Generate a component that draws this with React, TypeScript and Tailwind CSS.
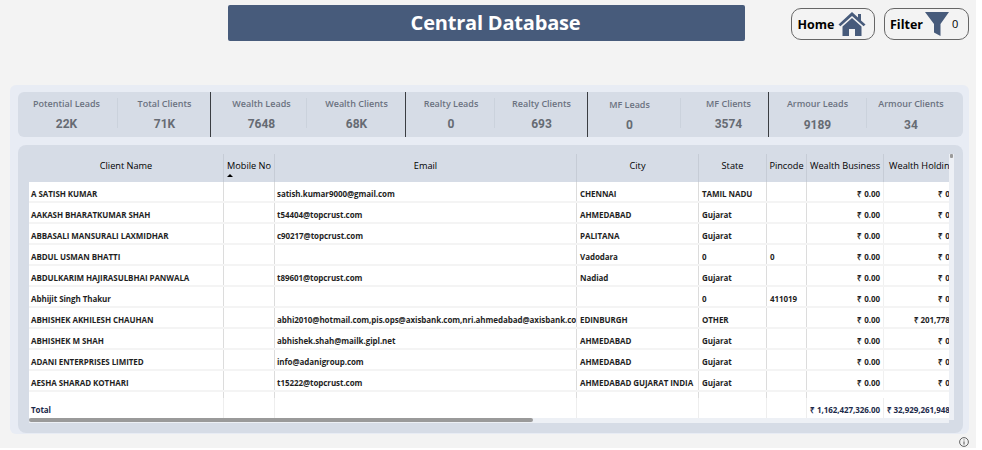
const kpiGroups = [
  [
    { label: "Potential Leads", value: "22K", width: "w-[99px]", pad: "pr-[2px]" },
    { label: "Total Clients", value: "71K", width: "w-[93px]", pad: "" },
  ],
  [
    { label: "Wealth Leads", value: "7648", width: "w-[95px]", pad: "pl-[6px]" },
    { label: "Wealth Clients", value: "68K", width: "w-[99px]", pad: "" },
  ],
  [
    { label: "Realty Leads", value: "0", width: "w-[88px]", pad: "pl-[2px]" },
    { label: "Realty Clients", value: "693", width: "w-[93px]", pad: "" },
  ],
  [
    { label: "MF Leads", value: "0", width: "w-[92px]", pad: "pr-[9px] pt-[6px]" },
    { label: "MF Clients", value: "3574", width: "w-[88px]", pad: "pl-[7px]" },
  ],
  [
    { label: "Armour Leads", value: "9189", width: "w-[97px]", pad: "", low: true },
    { label: "Armour Clients", value: "34", width: "w-[96px]", pad: "pr-[8px]", low: true },
  ],
];

const rows = [
  ["A SATISH KUMAR", "", "satish.kumar9000@gmail.com", "CHENNAI", "TAMIL NADU", "", "₹ 0.00", "₹ 0.00"],
  ["AAKASH BHARATKUMAR SHAH", "", "t54404@topcrust.com", "AHMEDABAD", "Gujarat", "", "₹ 0.00", "₹ 0.00"],
  ["ABBASALI MANSURALI LAXMIDHAR", "", "c90217@topcrust.com", "PALITANA", "Gujarat", "", "₹ 0.00", "₹ 0.00"],
  ["ABDUL USMAN BHATTI", "", "", "Vadodara", "0", "0", "₹ 0.00", "₹ 0.00"],
  ["ABDULKARIM HAJIRASULBHAI PANWALA", "", "t89601@topcrust.com", "Nadiad", "Gujarat", "", "₹ 0.00", "₹ 0.00"],
  ["Abhijit Singh Thakur", "", "", "", "0", "411019", "₹ 0.00", "₹ 0.00"],
  ["ABHISHEK AKHILESH CHAUHAN", "", "abhi2010@hotmail.com,pis.ops@axisbank.com,nri.ahmedabad@axisbank.com", "EDINBURGH", "OTHER", "", "₹ 0.00", "₹ 201,778.00"],
  ["ABHISHEK M SHAH", "", "abhishek.shah@mailk.gipl.net", "AHMEDABAD", "Gujarat", "", "₹ 0.00", "₹ 0.00"],
  ["ADANI ENTERPRISES LIMITED", "", "info@adanigroup.com", "AHMEDABAD", "Gujarat", "", "₹ 0.00", "₹ 0.00"],
  ["AESHA SHARAD KOTHARI", "", "t15222@topcrust.com", "AHMEDABAD GUJARAT INDIA", "Gujarat", "", "₹ 0.00", "₹ 0.00"],
];

const columns = ["w-[195px]", "w-[51px]", "w-[302px]", "w-[122px]", "w-[68px]", "w-[40px]", "w-[77px]", "w-[81px]"];
const headers = ["Client Name", "Mobile No", "Email", "City", "State", "Pincode", "Wealth Business", "Wealth Holdings"];
const totals = ["Total", "", "", "", "", "", "₹ 1,162,427,326.00", "₹ 32,929,261,948.00"];

function Kpi({ label, value, width, pad, low }: { label: string; value: string; width: string; pad: string; low?: boolean }) {
  return (
    <div className={`${width} pt-[5px] ${pad} shrink-0 flex flex-col items-center justify-start`}>
      <div className="text-[9px] leading-[13px] font-semibold text-[#6b7280] whitespace-nowrap">{label}</div>
      <div className={`font-['Roboto',sans-serif] text-[12px] leading-[14px] font-bold text-[#666b73] ${low ? "mt-[8px]" : "mt-[7px]"}`}>{value}</div>
    </div>
  );
}

function Row({ cells }: { cells: string[] }) {
  return (
    <div className="flex h-[21px] border-b-2 border-[#f4f4f4] bg-white">
      {cells.map((cell, i) => (
        <div
          key={i}
          className={`${columns[i]} shrink-0 h-full flex items-center pt-[4px] whitespace-nowrap overflow-hidden border-r ${i < 6 ? "border-[#dcdcdc]" : "border-[#f0f0f0]"} ${i > 5 ? "justify-end pr-[3px]" : ""} ${i === 0 || i === 2 ? "pl-[2px]" : i <= 5 ? "pl-[3px]" : ""}`}
        >
          {cell}
        </div>
      ))}
    </div>
  );
}

export default function App() {
  return (
    <div className="w-[982px] h-[450px] bg-white font-['Open_Sans',sans-serif] overflow-hidden relative">
      <div className="w-[976px] h-[448px] bg-[#f3f3f3] flex flex-col">
        <header className="flex items-start h-[85px] pt-[5px] pl-[228px]">
          <div className="w-[517px] h-[36px] bg-[#475b7b] rounded-[2px] flex items-center justify-center pl-[18px] text-white text-[20px] tracking-[-0.2px] font-bold">
            Central Database
          </div>
          <button className="ml-[46px] mt-[3px] w-[84px] h-[32px] border-[1.5px] border-[#666] rounded-[10px] flex items-center pl-[5.5px] text-[12.5px] font-bold text-black">
            <span className="mt-[2px]">Home</span>
            <svg width="28" height="26" viewBox="0 0 28 26" className="ml-[4px]">
              <path d="M14 1 L20 6.5 V3 H23 V9.4 L27.5 13.5 L25.6 15.3 L14 5 L2.4 15.3 L.5 13.5 Z" fill="#475b7b" />
              <path d="M14 7 L23.5 15.5 V25 H17 V18 H11 V25 H4.5 V15.5 Z" fill="#475b7b" />
            </svg>
          </button>
          <button className="ml-[9px] mt-[3px] w-[85px] h-[32px] border-[1.5px] border-[#666] rounded-[10px] flex items-center pl-[5px] text-[12.5px] font-bold text-black">
            <span className="mt-[2px]">Filter</span>
            <svg width="26" height="26" viewBox="0 0 26 26" className="ml-[1px]">
              <path d="M1 1 H25 L16.5 13 V25 L10 21.5 V13 Z" fill="#475b7b" />
            </svg>
            <span className="ml-[2px] font-normal text-[11px]">0</span>
          </button>
        </header>

        <main className="ml-[10px] w-[959px] h-[349px] bg-[#e8ecf4] rounded-[6px] pl-[8px] pr-[6px] pt-[7px] flex flex-col gap-[8px]">
          <section className="h-[45px] bg-[#d6dce6] rounded-[6px] flex">
            {kpiGroups.map((group, g) => (
              <div key={g} className={`flex ${g > 0 ? "shadow-[-1px_0_0_0_#3a3d42]" : ""}`}>
                <Kpi {...group[0]} />
                <div className="w-px h-[30px] mt-[6px] bg-[#cbd2dc]" />
                <Kpi {...group[1]} />
              </div>
            ))}
          </section>

          <section className="h-[288px] bg-[#d6dce6] rounded-[8px] pl-[11px] pt-[9px] relative">
            <div className="w-[920px] overflow-hidden text-[8px] tracking-[-0.07px] font-bold text-[#1f1f1f]">
              <div className="flex h-[28px] text-[9.2px] tracking-normal font-normal text-black">
                {headers.map((h, i) => (
                  <div
                    key={h}
                    className={`${columns[i]} shrink-0 flex items-center pb-[4px] whitespace-nowrap relative ${i < 7 ? "justify-center border-r border-[#c6ccd6]" : "justify-start pl-[5px]"}`}
                  >
                    {h}
                    {i === 1 && <span className="absolute left-[3px] bottom-[5px] w-0 h-0 border-x-[3px] border-x-transparent border-b-[3px] border-b-black" />}
                  </div>
                ))}
              </div>
              {rows.map((r) => (
                <Row key={r[0]} cells={r} />
              ))}
              <div className="h-[6px] bg-white flex">
                {columns.map((c, i) => (
                  <div key={c + i} className={`${c} shrink-0 ${i < 6 ? "border-r border-[#dcdcdc]" : ""}`} />
                ))}
              </div>
              <div className="flex h-[20px] bg-white text-[#1c2a4a]">
                {totals.map((cell, i) => (
                  <div
                    key={i}
                    className={`${columns[i]} shrink-0 flex items-center pt-[3px] pl-[2px] pr-[3px] whitespace-nowrap overflow-hidden border-r border-[#eeeeee] ${i > 5 ? "justify-end" : ""}`}
                  >
                    {cell}
                  </div>
                ))}
              </div>
              <div className="h-[5px] bg-[#edf0f5]">
                <div className="w-[504px] h-[4px] bg-[#9a9a9a] rounded-[2px]" />
              </div>
            </div>
            <div className="absolute left-[931px] top-[9px] w-[5px] h-[266px] bg-[#edf0f5]">
              <div className="mx-auto w-[3px] h-[4px] bg-[#9a9a9a] rounded-[1px]" />
            </div>
          </section>
        </main>
      </div>
      <svg width="10" height="10" viewBox="0 0 10 10" className="absolute left-[959px] top-[437px]">
        <circle cx="5" cy="5" r="4.4" fill="none" stroke="#555" strokeWidth="0.9" />
        <path d="M5 2.5 V3.4 M5 4.4 V7.6" stroke="#555" strokeWidth="1" />
      </svg>
    </div>
  );
}
